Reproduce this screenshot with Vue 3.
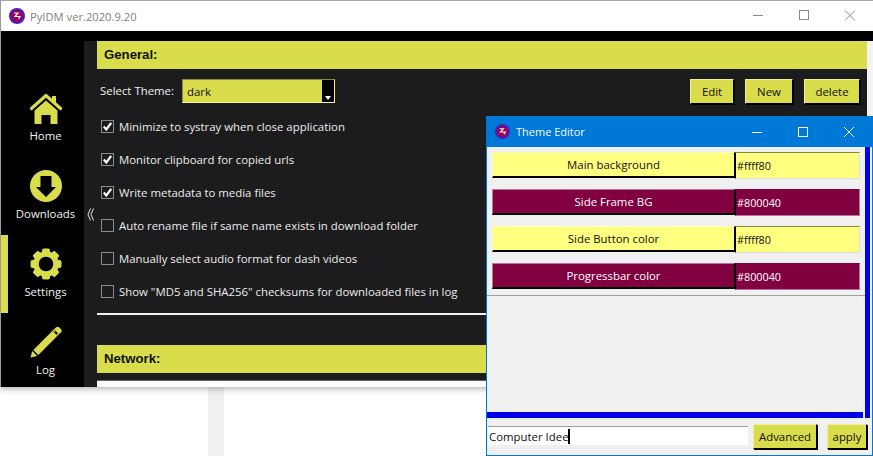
<script setup>
const navItems = [
  { key: 'home', label: 'Home' },
  { key: 'downloads', label: 'Downloads' },
  { key: 'settings', label: 'Settings', active: true },
  { key: 'log', label: 'Log' },
]
const options = [
  { label: 'Minimize to systray when close application', on: true },
  { label: 'Monitor clipboard for copied urls', on: true },
  { label: 'Write metadata to media files', on: true },
  { label: 'Auto rename file if same name exists in download folder', on: false },
  { label: 'Manually select audio format for dash videos', on: false },
  { label: 'Show "MD5 and SHA256" checksums for downloaded files in log', on: false },
]
const colors = [
  { label: 'Main background', value: '#ffff80', dark: false },
  { label: 'Side Frame BG', value: '#800040', dark: true },
  { label: 'Side Button color', value: '#ffff80', dark: false },
  { label: 'Progressbar color', value: '#800040', dark: true },
]
const gearTeeth = [0, 45, 90, 135, 180, 225, 270, 315]
</script>

<template>
  <div class="page">
    <div class="main-window">
      <div class="titlebar">
        <svg class="app-icon" viewBox="0 0 16 16"><circle cx="8" cy="8" r="8" fill="#3a22c8"/><circle cx="8" cy="8" r="6" fill="#a00050"/><path d="M5 5h4L6 8.500h5l-1.500 2.500" fill="none" stroke="#fff" stroke-width="1.200"/></svg>
        <span class="title-text">PyIDM ver.2020.9.20</span>
        <div class="win-buttons">
          <svg viewBox="0 0 46 30"><path d="M18 14.500h10" stroke="#8a8a8a"/></svg>
          <svg viewBox="0 0 46 30"><rect x="18.500" y="9.500" width="9" height="9" fill="none" stroke="#8a8a8a"/></svg>
          <svg viewBox="0 0 46 30"><path d="M18 9.500l10 10M28 9.500l-10 10" stroke="#8a8a8a" fill="none"/></svg>
        </div>
      </div>
      <div class="body">
        <nav class="sidebar">
          <div v-for="item in navItems" :key="item.key" class="nav-item" :class="{ active: item.active }">
            <svg v-if="item.key === 'home'" class="nav-icon" viewBox="0 0 32 32">
              <path d="M1.500 16.500 16 3.500l14.500 13" fill="none" stroke="#d9dc4b" stroke-width="3.200" stroke-linecap="round" stroke-linejoin="round"/>
              <rect x="22" y="4" width="4" height="7" fill="#d9dc4b"/>
              <path d="M4.500 18.500 16 8.500l11.500 10V32H20.500v-9h-9v9h-7z" fill="#d9dc4b"/>
            </svg>
            <svg v-else-if="item.key === 'downloads'" class="nav-icon" viewBox="0 0 32 32">
              <circle cx="16" cy="16" r="16" fill="#d9dc4b"/>
              <path d="M10.500 6h11v11H26L16 27 6 17h4.500z" fill="#000"/>
            </svg>
            <svg v-else-if="item.key === 'settings'" class="nav-icon" viewBox="0 0 32 32">
              <circle cx="16" cy="16" r="10" fill="none" stroke="#d9dc4b" stroke-width="5.500"/>
              <rect v-for="a in gearTeeth" :key="a" x="12" y="0.500" width="8" height="7" rx="2" fill="#d9dc4b" :transform="`rotate(${a} 16 16)`"/>
            </svg>
            <svg v-else class="nav-icon" viewBox="0 0 32 32">
              <path d="M0.500 31.500 2.200 25 7.300 30z" fill="#d9dc4b"/>
              <path d="M3.300 24 22.500 4.800l5 5L8.300 29z" fill="#d9dc4b"/>
              <path d="M24 3.200l1.800-1.800c1-1 2.500-1 3.500 0l1.600 1.600c1 1 1 2.500 0 3.500L29 8.300z" fill="#d9dc4b"/>
              <path d="M23 3.800l2 2M27 7.800l1.400 1.400" stroke="#d9dc4b" stroke-width="1.500"/>
            </svg>
            <span class="nav-label">{{ item.label }}</span>
          </div>
        </nav>
        <svg class="collapse" viewBox="0 0 7 13"><path d="M3.500.500 1 6.500l2.500 6M6.500.500 4 6.500l2.500 6" fill="none" stroke="#e8e8e8"/></svg>
        <div class="content">
          <div class="section-head">General:</div>
          <div class="theme-row">
            <span class="theme-label">Select Theme:</span>
            <div class="select"><span>dark</span><i class="select-arrow"><b></b></i></div>
            <div class="theme-buttons">
              <button class="btn edit">Edit</button>
              <button class="btn new">New</button>
              <button class="btn del">delete</button>
            </div>
          </div>
          <div class="options">
            <label v-for="o in options" :key="o.label" class="option">
              <span class="check">
                <svg v-if="o.on" viewBox="0 0 11 11"><path d="M1.800 5.500 4.300 8.500 9.200 1.800" fill="none" stroke="#fff" stroke-width="2.200"/></svg>
              </span>
              {{ o.label }}
            </label>
          </div>
          <hr class="rule" />
          <div class="section-head network">Network:</div>
          <div class="white-strip"></div>
        </div>
        <div class="main-scroll"></div>
      </div>
    </div>
    <div class="below">
      <div class="below-left"></div>
      <div class="below-gutter"></div>
    </div>

    <div class="editor">
      <div class="ed-title">
        <svg class="ed-icon" viewBox="0 0 16 16"><circle cx="8" cy="8" r="8" fill="#3a22c8"/><circle cx="8" cy="8" r="6" fill="#a00050"/><path d="M5 5h4L6 8.500h5l-1.500 2.500" fill="none" stroke="#fff" stroke-width="1.200"/></svg>
        <span class="ed-title-text">Theme Editor</span>
        <div class="win-buttons ed-buttons">
          <svg viewBox="0 0 46 30"><path d="M18 15.500h10" stroke="#fff"/></svg>
          <svg viewBox="0 0 46 30"><rect x="18.500" y="10.500" width="9" height="9" fill="none" stroke="#fff"/></svg>
          <svg viewBox="0 0 46 30"><path d="M18 10l10 10M28 10L18 20" stroke="#fff" fill="none"/></svg>
        </div>
      </div>
      <div class="ed-body">
        <div class="ed-main">
          <div class="ed-list">
            <div v-for="c in colors" :key="c.label" class="color-row" :class="{ dark: c.dark }">
              <div class="color-btn">{{ c.label }}</div>
              <div class="color-val">{{ c.value }}</div>
            </div>
          </div>
          <div class="ed-blank"></div>
          <div class="ed-hbar"></div>
        </div>
        <div class="ed-vbar"></div>
      </div>
      <div class="ed-footer">
        <div class="ed-input"><span>Computer Idee</span><i class="caret"></i></div>
        <button class="btn adv">Advanced</button>
        <button class="btn apply">apply</button>
      </div>
    </div>
  </div>
</template>

<style>
html, body { margin: 0; background: #fff; }
</style>

<style scoped>
.page {
  position: relative;
  width: 873px;
  height: 456px;
  overflow: hidden;
  background: #fff;
  font-family: "Open Sans", "Noto Sans", sans-serif;
  font-size: 11.4px;
  color: #f0f0f0;
}
.main-window {
  height: 387px;
  box-sizing: border-box;
  border-top: 1px solid #a8a8a8;
  border-left: 1px solid #9a9a9a;
  display: flex;
  flex-direction: column;
  box-shadow: 0 2px 6px rgba(0, 0, 0, .3);
  position: relative;
}
.titlebar {
  height: 30px;
  flex: none;
  display: flex;
  align-items: center;
  background: #fff;
  padding-left: 8px;
}
.app-icon { width: 16px; height: 16px; margin-right: 5px; }
.title-text { color: #7f7f7f; font-size: 11.2px; }
.win-buttons { margin-left: auto; display: flex; }
.win-buttons svg { width: 46px; height: 30px; display: block; }
.body { flex: 1; min-height: 0; display: flex; background: #000; position: relative; }
.sidebar {
  width: 83px;
  flex: none;
  padding-top: 48px;
  display: flex;
  flex-direction: column;
}
.nav-item {
  height: 78px;
  box-sizing: border-box;
  display: flex;
  flex-direction: column;
  align-items: center;
  padding: 13px 1px 0 0;
  flex: none;
  border-left: 7px solid transparent;
}
.nav-item.active { border-left-color: #d9dc4b; }
.nav-icon { width: 32px; height: 32px; display: block; }
.nav-label { margin-top: 3px; line-height: 17px; color: #f0f0f0; }
.collapse {
  position: absolute;
  left: 86px;
  top: 177px;
  width: 7px;
  height: 13px;
  z-index: 2;
}
.content {
  flex: 1;
  min-width: 0;
  background: #1c1c1e;
  margin-top: 10px;
  padding-left: 13px;
  display: flex;
  flex-direction: column;
}
.section-head {
  height: 28px;
  flex: none;
  background: #d9dc4b;
  color: #111;
  font-family: "Liberation Sans", sans-serif;
  font-weight: bold;
  font-size: 13.2px;
  line-height: 28px;
  padding-left: 7px;
}
.theme-row {
  display: flex;
  align-items: flex-start;
  height: 25px;
  margin-top: 10px;
  padding-left: 3px;
}
.theme-label { width: 82px; flex: none; line-height: 24px; }
.select {
  width: 153px;
  height: 24px;
  box-sizing: border-box;
  background: #d9dc4b;
  color: #111;
  display: flex;
  align-items: center;
  padding-left: 4px;
  border: 1px solid #f5f5a0;
  border-left-color: #8a8a3a;
  border-top-color: #8a8a3a;
  position: relative;
}
.select-arrow {
  position: absolute;
  right: 0;
  top: 0;
  bottom: 0;
  width: 12px;
  background: #000;
}
.select-arrow b {
  position: absolute;
  left: 3px;
  bottom: 2px;
  border-left: 3px solid transparent;
  border-right: 3px solid transparent;
  border-top: 4px solid #fff;
}
.theme-buttons { margin-left: auto; display: flex; gap: 11px; padding-right: 7px; }
.btn {
  height: 25px;
  padding: 0;
  box-sizing: border-box;
  background: #d9dc4b;
  color: #111;
  font: inherit;
  border: 1px solid #000;
  border-color: #f0f09a #000 #000 #f0f09a;
  box-shadow: 1px 1px 0 #000;
}
.edit { width: 44px; }
.new { width: 48px; }
.del { width: 56px; }
.options { margin-top: 6px; padding-left: 4px; display: flex; flex-direction: column; }
.option { height: 33px; display: flex; align-items: center; gap: 5px; color: #ececec; }
.check {
  width: 11px;
  height: 11px;
  box-sizing: content-box;
  border: 1px solid #8c8c8c;
  flex: none;
  display: block;
}
.check svg { width: 11px; height: 11px; display: block; }
.rule { margin: 5px 0 0; border: 0; height: 2px; background: #f0f0f0; flex: none; }
.network { margin-top: 30px; }
.white-strip { height: 7px; margin-top: 7px; background: #fff; flex: none; border-top: 1px solid #666; box-sizing: border-box; }
.main-scroll { width: 6px; flex: none; background: #f4f4f4; margin-top: 10px; }
.below { display: flex; height: 69px; }
.below-left { width: 208px; }
.below-gutter { width: 16px; background: #f0f0f0; }

.editor {
  position: absolute;
  left: 486px;
  top: 116px;
  width: 387px;
  height: 340px;
  box-sizing: border-box;
  border: 1px solid #0078d7;
  border-top: 0;
  background: #f0f0f0;
  display: flex;
  flex-direction: column;
  color: #111;
}
.ed-title {
  height: 31px;
  flex: none;
  background: #0078d7;
  display: flex;
  align-items: center;
  padding-left: 9px;
  color: #fff;
  margin: 0 -1px;
}
.ed-icon { width: 15px; height: 15px; margin-right: 6px; }
.ed-title-text { font-size: 11px; color: #f2f8fd; }
.ed-buttons { margin-right: 1px; }
.ed-body { height: 271px; flex: none; display: flex; }
.ed-main { flex: 1; min-width: 0; display: flex; flex-direction: column; }
.ed-list {
  height: 149px;
  flex: none;
  padding: 5px 0 0 5px;
  border-bottom: 1px solid #9aa0a8;
  box-sizing: border-box;
  display: flex;
  flex-direction: column;
}
.color-row { height: 37px; flex: none; display: flex; }
.color-btn {
  width: 243px;
  height: 26px;
  box-sizing: border-box;
  background: #ffff80;
  border: 1px solid #ffffc0;
  border-right-color: #000;
  border-bottom: 2px solid #000;
  text-align: center;
  line-height: 23px;
}
.color-val {
  width: 125px;
  height: 27px;
  box-sizing: border-box;
  background: #ffff80;
  border: 1px solid #ddd;
  border-top-color: #8a8a40;
  border-left-color: #000;
  padding-left: 1px;
  line-height: 25px;
  font-size: 10.8px;
}
.dark .color-btn { background: #800040; color: #fff; border-color: #c070a0 #000 #000 #c070a0; }
.dark .color-val { background: #800040; color: #fff; border-color: #800040 #c070a0 #c070a0 #000; }
.ed-blank { flex: 1; }
.ed-hbar { height: 6px; background: #0000e6; flex: none; margin-right: 2px; }
.ed-vbar { width: 5px; flex: none; background: #0000e6; margin-right: 2px; }
.ed-footer {
  flex: 1;
  display: flex;
  align-items: flex-start;
  padding-top: 6px;
  padding-left: 1px;
}
.ed-input {
  width: 260px;
  height: 19px;
  margin-top: 2px;
  box-sizing: border-box;
  background: #fff;
  border-top: 1px solid #a0a0a0;
  padding-left: 1px;
  display: flex;
  align-items: center;
}
.caret { width: 2px; height: 15px; background: #000; display: block; margin-left: -1px; }
.adv { width: 64px; margin-left: 5px; }
.apply { width: 40px; margin-left: 10px; }
</style>
